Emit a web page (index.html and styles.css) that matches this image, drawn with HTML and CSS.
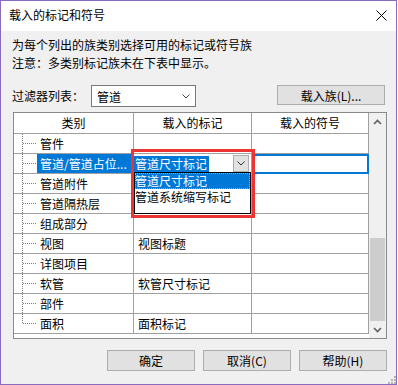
FILE: index.html
```html
<!DOCTYPE html>
<html lang="zh-CN">
<head>
    <meta charset="UTF-8">
    <meta name="viewport" content="width=device-width, initial-scale=1.0">
    <title>载入的标记和符号</title>
    <link rel="stylesheet" href="styles.css">
</head>
<body>
    <div class="window">
        <div class="titlebar">
            <span class="title">载入的标记和符号</span>
            <svg class="close" width="11" height="11" viewBox="0 0 11 11">
                <path d="M0.5 0.5 L10.5 10.5 M10.5 0.5 L0.5 10.5" stroke="#000" stroke-width="1" fill="none"/>
            </svg>
        </div>

        <div class="content">
            <p class="note">为每个列出的族类别选择可用的标记或符号族</p>
            <p class="note">注意：多类别标记族未在下表中显示。</p>

            <div class="filter-row">
                <label>过滤器列表：</label>
                <div class="combo">
                    <span>管道</span>
                    <svg width="8" height="5" viewBox="0 0 8 5"><polyline points="0.5,0.5 4,4 7.5,0.5" stroke="#444" fill="none"/></svg>
                </div>
                <button class="btn btn-load">载入族(L)...</button>
            </div>

            <div class="grid">
                <div class="table">
                    <div class="row head">
                        <div class="cell">类别</div>
                        <div class="cell">载入的标记</div>
                        <div class="cell">载入的符号</div>
                    </div>
                    <div class="row">
                        <div class="cell tree"><span class="name">管件</span></div>
                        <div class="cell mark"></div>
                        <div class="cell"></div>
                    </div>
                    <div class="row">
                        <div class="cell tree"><span class="name selected">管道/管道占位...</span></div>
                        <div class="cell editor">
                            <span class="editor-text">管道尺寸标记</span>
                            <span class="drop-btn">
                                <svg width="8" height="5" viewBox="0 0 8 5"><polyline points="0.5,0.5 4,4 7.5,0.5" stroke="#333" fill="none"/></svg>
                            </span>
                            <div class="drop-list">
                                <div class="option active">管道尺寸标记</div>
                                <div class="option">管道系统缩写标记</div>
                            </div>
                        </div>
                        <div class="cell focus"></div>
                    </div>
                    <div class="row">
                        <div class="cell tree"><span class="name">管道附件</span></div>
                        <div class="cell mark"></div>
                        <div class="cell"></div>
                    </div>
                    <div class="row">
                        <div class="cell tree"><span class="name">管道隔热层</span></div>
                        <div class="cell mark"></div>
                        <div class="cell"></div>
                    </div>
                    <div class="row">
                        <div class="cell tree"><span class="name">组成部分</span></div>
                        <div class="cell mark"></div>
                        <div class="cell"></div>
                    </div>
                    <div class="row">
                        <div class="cell tree"><span class="name">视图</span></div>
                        <div class="cell mark">视图标题</div>
                        <div class="cell"></div>
                    </div>
                    <div class="row">
                        <div class="cell tree"><span class="name">详图项目</span></div>
                        <div class="cell mark"></div>
                        <div class="cell"></div>
                    </div>
                    <div class="row">
                        <div class="cell tree"><span class="name">软管</span></div>
                        <div class="cell mark">软管尺寸标记</div>
                        <div class="cell"></div>
                    </div>
                    <div class="row">
                        <div class="cell tree"><span class="name">部件</span></div>
                        <div class="cell mark"></div>
                        <div class="cell"></div>
                    </div>
                    <div class="row">
                        <div class="cell tree last"><span class="name">面积</span></div>
                        <div class="cell mark">面积标记</div>
                        <div class="cell"></div>
                    </div>
                </div>

                <div class="scrollbar">
                    <div class="sb-arrow">
                        <svg width="9" height="6" viewBox="0 0 9 6"><polyline points="1,5 4.5,1.5 8,5" stroke="#606060" stroke-width="1.6" fill="none"/></svg>
                    </div>
                    <div class="sb-track"><div class="sb-thumb"></div></div>
                    <div class="sb-arrow">
                        <svg width="9" height="6" viewBox="0 0 9 6"><polyline points="1,1 4.5,4.5 8,1" stroke="#606060" stroke-width="1.6" fill="none"/></svg>
                    </div>
                </div>

                <!-- red annotation box around the dropdown -->
                <div class="callout"></div>
            </div>

            <div class="actions">
                <button class="btn">确定</button>
                <button class="btn">取消(C)</button>
                <button class="btn">帮助(H)</button>
            </div>
        </div>

        <svg class="grip" width="8" height="8" viewBox="0 0 8 8" fill="#b4b4b4">
            <rect x="6" y="0" width="2" height="2"/>
            <rect x="3" y="3" width="2" height="2"/>
            <rect x="6" y="3" width="2" height="2"/>
            <rect x="0" y="6" width="2" height="2"/>
            <rect x="3" y="6" width="2" height="2"/>
            <rect x="6" y="6" width="2" height="2"/>
        </svg>
    </div>
</body>
</html>
```

FILE: styles.css
```css
/* Dialog frame */
body {
    margin: 0;
    background: #fff;
    font-family: "Noto Sans CJK SC", "Noto Sans", sans-serif;
    font-size: 12px;
    color: #000;
}

.window {
    position: relative;
    width: 397px;
    height: 385px;
    box-sizing: border-box;
    border: 1px solid #8b6bbd;
    background: #f0f0f0;
}

.titlebar {
    display: flex;
    height: 30px;
    box-sizing: border-box;
    padding: 5px 9px 0 8px;
    background: #fff;
}

.title {
    line-height: 18px;
}

.close {
    display: block;
    margin-left: auto;
    margin-top: 4px;
}

.content {
    padding: 5px 9px 0 11px;
}

.note {
    margin: 0;
    line-height: 18px;
}

/* Filter row */
.filter-row {
    display: flex;
    align-items: flex-start;
    margin-top: 13px;
}

.filter-row label {
    width: 79px;
    line-height: 22px;
}

.combo {
    display: flex;
    align-items: center;
    width: 105px;
    height: 22px;
    box-sizing: border-box;
    padding: 0 5px;
    border: 1px solid #7a7a7a;
    background: #fff;
}

.combo svg {
    margin-left: auto;
}

.btn {
    font: inherit;
    color: #000;
    background: #e1e1e1;
    border: 1px solid #adadad;
    padding: 0;
}

.btn-load {
    width: 108px;
    height: 20px;
    margin-left: auto;
    margin-right: 2px;
}

/* Category grid */
.grid {
    position: relative;
    display: flex;
    width: 374px;
    height: 227px;
    box-sizing: border-box;
    margin: 5px 0 0 1px;
    border: 1px solid #8a8a8a;
    background: #fff;
}

.table {
    width: 355px;
}

.row {
    display: grid;
    grid-template-columns: 120px 118px 117px;
}

.cell {
    height: 20px;
    box-sizing: border-box;
    border-right: 1px solid #a0a0a0;
    border-bottom: 1px solid #a0a0a0;
    line-height: 19px;
    white-space: nowrap;
}

.head .cell {
    height: 21px;
    line-height: 20px;
    text-align: center;
}

.mark {
    padding-left: 4px;
}

/* dotted tree branches in the first column */
.tree {
    display: flex;
    padding-left: 23px;
    background:
        repeating-linear-gradient(#808080 0 1px, transparent 1px 2px) 8px 0 / 1px 100% no-repeat,
        repeating-linear-gradient(90deg, #808080 0 1px, transparent 1px 2px) 9px 9px / 14px 1px no-repeat;
}

.tree.last {
    background-size: 1px 10px, 14px 1px;
}

.name {
    padding: 0 3px;
}

.name.selected {
    flex: 1;
    margin-right: 1px;
    background: #0078d7;
    color: #fff;
}

/* in-cell combobox */
.editor {
    position: relative;
    display: flex;
    align-items: center;
}

.editor-text {
    padding: 0 2px 0 1px;
    line-height: 16px;
    background: #0078d7;
    color: #fff;
}

.drop-btn {
    display: flex;
    align-items: center;
    justify-content: center;
    width: 16px;
    height: 17px;
    box-sizing: border-box;
    margin-left: auto;
    margin-right: 2px;
    border: 1px solid #adadad;
    background: #e1e1e1;
}

.drop-list {
    position: absolute;
    left: 0;
    top: 18px;
    z-index: 2;
    width: 117px;
    height: 42px;
    box-sizing: border-box;
    border: 1px solid #000;
    background: #fff;
}

.option {
    height: 16px;
    line-height: 16px;
}

.option.active {
    background: #0078d7;
    color: #fff;
    outline: 1px dotted #f0a040;
    outline-offset: -1px;
}

.focus {
    outline: 2px solid #0078d7;
    outline-offset: -2px;
}

.callout {
    position: absolute;
    left: 117px;
    top: 36px;
    z-index: 3;
    width: 124px;
    height: 69px;
    box-sizing: border-box;
    border: 3px solid #ec3434;
}

/* Scrollbar */
.scrollbar {
    display: flex;
    flex-direction: column;
    width: 17px;
    background: #f0f0f0;
}

.sb-arrow {
    display: flex;
    align-items: center;
    justify-content: center;
    height: 17px;
}

.sb-track {
    flex: 1;
    display: flex;
    flex-direction: column;
    justify-content: flex-end;
}

.sb-thumb {
    height: 83px;
    margin: 0 1px;
    background: #cdcdcd;
}

/* Bottom buttons */
.actions {
    display: flex;
    justify-content: flex-end;
    gap: 8px;
    margin-top: 11px;
}

.actions .btn {
    width: 88px;
    height: 21px;
}

.grip {
    position: absolute;
    right: 0;
    bottom: 0;
}
```
